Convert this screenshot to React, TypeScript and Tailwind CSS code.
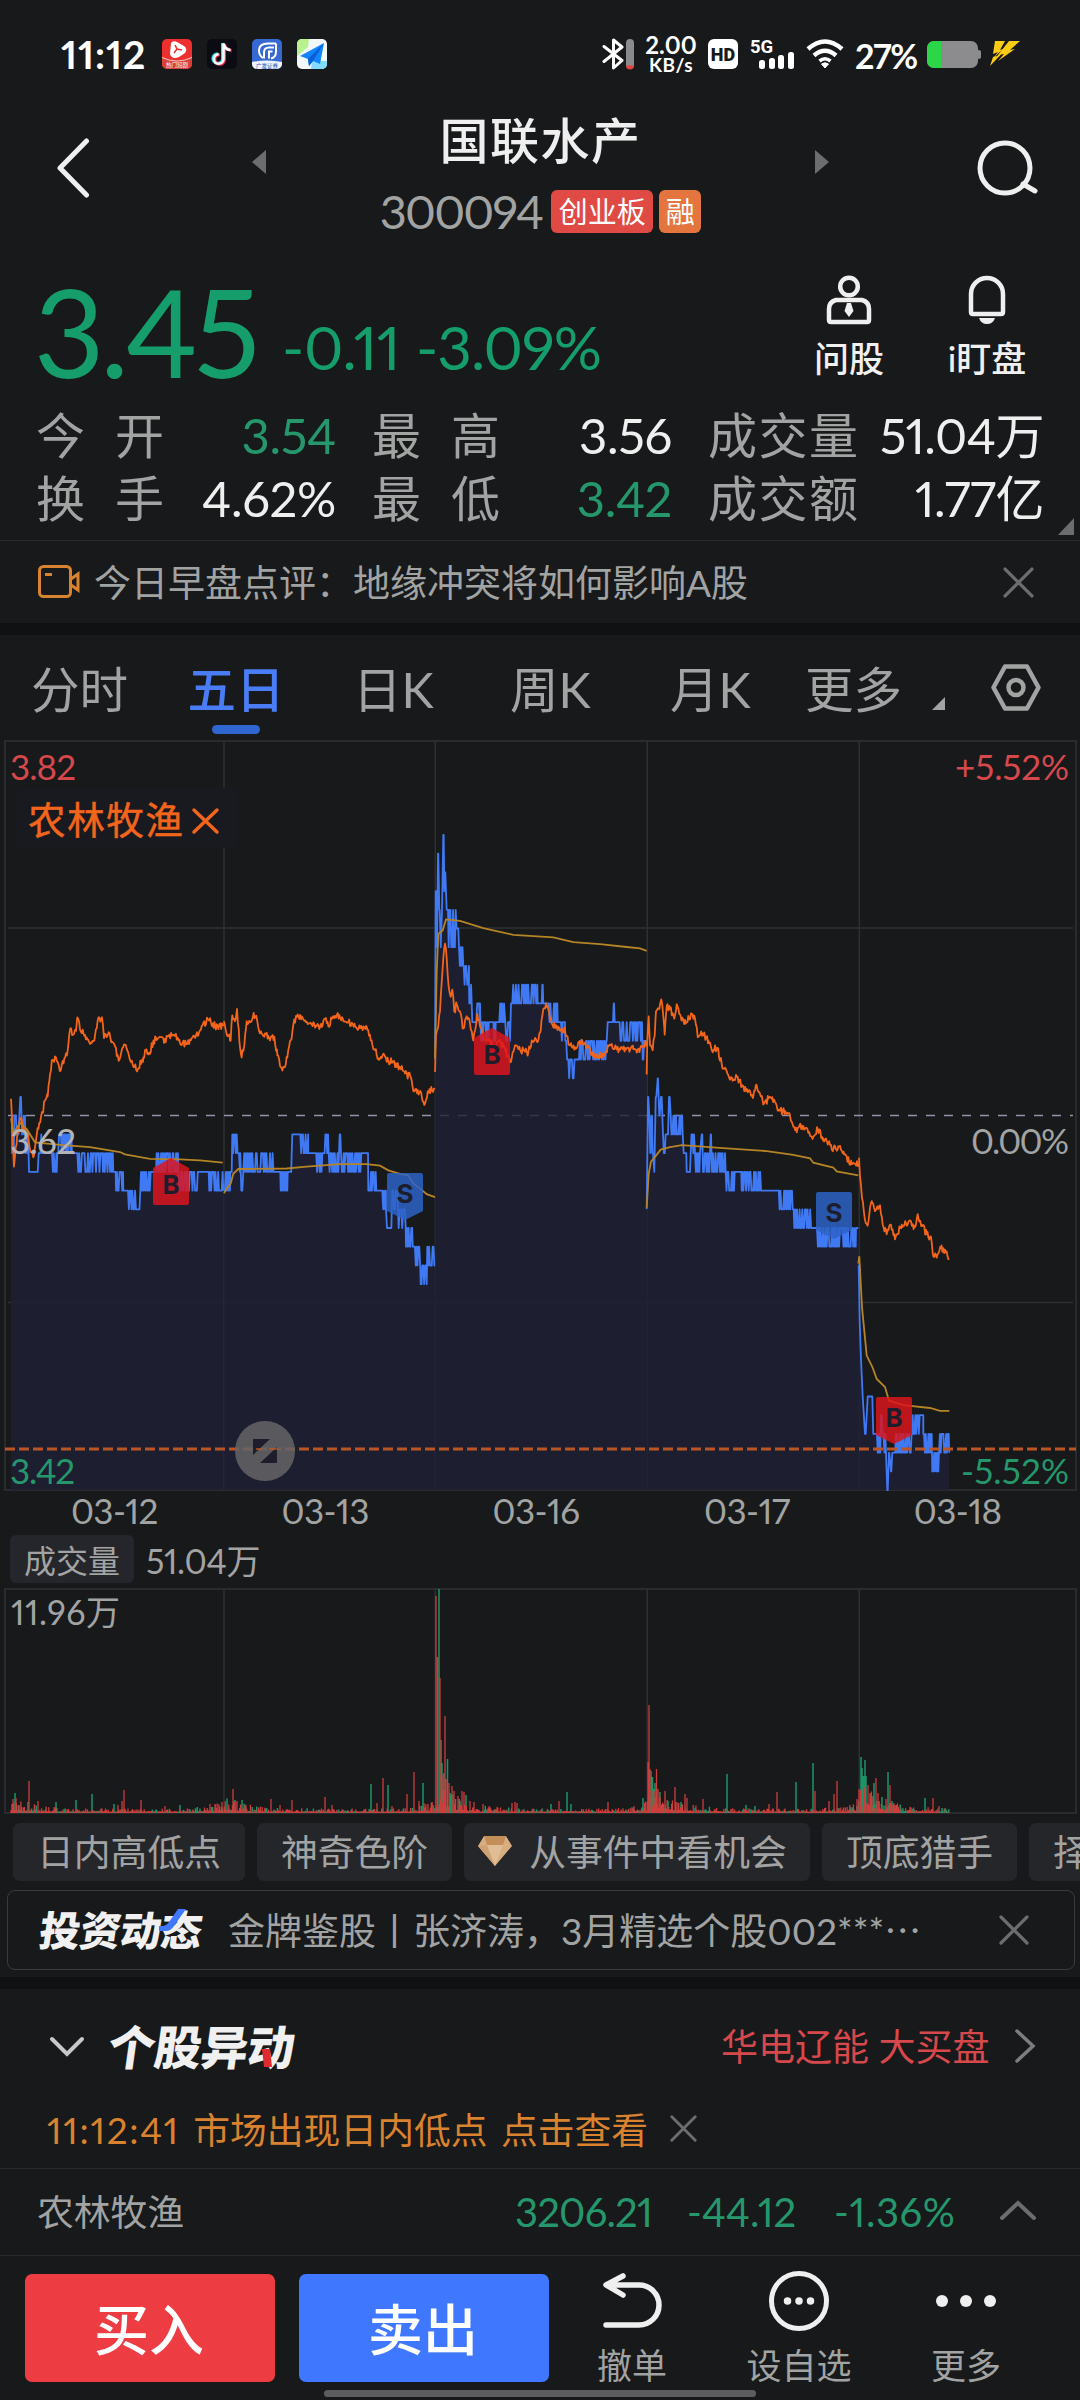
import type { ReactNode } from "react";
import { clsx } from "clsx";

type Point = [number, number];
// from, to, lowest tick, highest tick
type Run = [number, number, number, number];

// Chart traces are stored at 3 sub-steps per pixel horizontally.
const SUB_X = 3;
const SUB_Y = 2.063;
const CHART_TOP = 740;
const CHART_BOTTOM = 1490;
const ZERO_Y = 1115.7;
const TICK = 18.72;
const MINUTE = 2.65;

const DAY_OFFSET = [0, 0, 400, 640, 640];
const GRID_X = [224, 435.3, 647.3, 859.3];

const PRICE_RUNS: Run[][] = [
  [
    [33, 36, 0, 0], [36, 43, -2, 0], [45, 58, -1, 0], [61, 63, 1, 1], [66, 75, -1, 0], [76, 85, -2, -1],
    [87, 113, -3, -3], [116, 124, -2, -1], [125, 154, -2, -2], [156, 170, -3, -2], [172, 214, -2, -1],
    [216, 225, -2, -2], [227, 340, -3, -2], [342, 347, -3, -3], [348, 370, -4, -3], [371, 382, -4, -4],
    [384, 421, -5, -4], [423, 455, -4, -3], [456, 468, -3, -3], [470, 534, -3, -2], [535, 600, -4, -3],
    [601, 626, -3, -3], [628, 670, -4, -3],
  ],
  [
    [672, 690, -4, -3], [691, 695, -3, -3], [697, 715, -2, -1], [717, 721, -3, -2], [724, 727, -4, -4],
    [730, 757, -3, -2], [757, 830, -3, -2], [831, 841, -3, -3], [842, 862, -4, -3], [863, 875, -3, -2],
    [877, 925, -2, -1], [926, 944, -2, -2], [946, 968, -3, -2], [971, 984, -2, -1], [986, 1017, -3, -2],
    [1019, 1021, -1, -1], [1023, 1085, -3, -2], [1086, 1104, -2, -2], [1105, 1127, -4, -3],
    [1129, 1145, -4, -4], [1147, 1158, -5, -4], [1161, 1174, -6, -6], [1177, 1194, -5, -4],
    [1196, 1217, -6, -5], [1218, 1238, -7, -6], [1242, 1261, -8, -7], [1262, 1280, -9, -8], [1282, 1305, -8, -7],
  ],
  [
    [105, 105, 3, 3], [107, 108, 12, 12], [110, 111, 9, 9], [114, 115, 14, 14], [118, 119, 11, 11],
    [122, 122, 9, 9], [126, 126, 11, 11], [130, 131, 15, 15], [133, 133, 12, 12], [136, 136, 13, 13],
    [140, 144, 11, 11], [146, 175, 9, 11], [177, 190, 8, 9], [191, 207, 7, 8], [208, 215, 6, 7],
    [217, 227, 5, 5], [229, 240, 5, 6], [243, 286, 4, 5], [287, 297, 5, 5], [298, 312, 5, 6],
    [316, 330, 4, 5], [333, 336, 6, 6], [337, 412, 6, 7], [413, 425, 6, 6], [427, 428, 7, 7],
    [430, 445, 6, 6], [446, 472, 5, 6], [473, 482, 5, 5], [483, 495, 4, 5], [496, 503, 3, 4],
    [505, 525, 2, 3], [526, 536, 3, 3], [537, 620, 3, 4], [623, 639, 5, 5], [641, 642, 6, 6],
    [644, 650, 5, 5], [651, 726, 4, 5], [728, 730, 3, 3], [732, 740, 4, 4],
  ],
  [
    [20, 20, -5, -5], [24, 25, 1, 1], [28, 28, 0, 0], [31, 32, -2, -2], [34, 36, 0, 0], [38, 39, -2, -2],
    [43, 43, -3, -3], [47, 49, 1, 1], [53, 54, 2, 2], [58, 59, 0, 0], [63, 65, 1, 1], [69, 79, -2, -1],
    [81, 84, -1, -1], [87, 89, 1, 1], [92, 107, -1, 0], [108, 128, -1, 0], [131, 139, -2, -2],
    [140, 150, -3, -3], [152, 162, -2, -1], [165, 180, -3, -2], [185, 187, -1, -1], [189, 208, -3, -2],
    [212, 213, -1, -1], [216, 255, -3, -2], [257, 282, -4, -3], [284, 304, -3, -3], [305, 365, -4, -3],
    [368, 410, -4, -4], [411, 456, -5, -4], [458, 461, -5, -5], [463, 515, -6, -5], [516, 529, -6, -6],
    [531, 647, -7, -6], [648, 655, -6, -6],
  ],
  [
    [655, 656, -8, -8], [659, 659, -11, -11], [663, 663, -13, -13], [668, 668, -15, -15], [675, 677, -17, -17],
    [683, 697, -15, -15], [700, 711, -17, -17], [713, 721, -18, -17], [723, 725, -16, -16], [728, 738, -18, -17],
    [742, 743, -20, -20], [747, 748, -18, -18], [753, 754, -19, -19], [757, 766, -18, -18], [767, 817, -18, -17],
    [818, 850, -17, -16], [852, 875, -18, -17], [877, 895, -19, -18], [897, 928, -18, -17],
  ],
];

const SECTOR: Point[][] = [
  [
    [33, 740], [37, 800], [42, 880], [47, 840], [60, 782], [72, 800], [82, 805], [92, 850], [102, 857], [110, 815],
    [118, 790], [127, 770], [134, 745], [143, 735], [150, 690], [157, 660], [168, 655], [180, 683], [193, 657],
    [203, 640], [211, 595], [220, 608], [228, 600], [232, 572], [240, 597], [255, 608], [262, 618], [275, 625],
    [285, 610], [293, 578], [306, 572], [312, 615], [326, 603], [335, 622], [345, 632], [356, 662], [372, 628],
    [385, 645], [398, 670], [413, 680], [430, 655], [437, 640], [447, 645], [467, 613], [480, 612], [492, 625],
    [508, 608], [525, 610], [540, 625], [562, 627], [575, 615], [592, 610], [605, 590], [625, 577], [645, 590], [671, 590],
  ],
  [
    [671, 580], [677, 598], [685, 610], [692, 620], [697, 568], [705, 580], [711, 555], [718, 620], [725, 655],
    [733, 630], [740, 580], [750, 582], [761, 563], [772, 580], [780, 605], [795, 605], [810, 620], [823, 612],
    [832, 650], [842, 675], [852, 675], [862, 655], [872, 620], [880, 588], [890, 572], [905, 570], [918, 582],
    [935, 585], [950, 590], [965, 592], [975, 575], [985, 590], [1000, 570], [1018, 567], [1030, 580], [1045, 583],
    [1065, 590], [1085, 592], [1102, 598], [1112, 620], [1125, 640], [1137, 660], [1152, 648], [1165, 662],
    [1180, 665], [1200, 675], [1215, 688], [1232, 695], [1243, 725], [1253, 722], [1265, 735], [1273, 753],
    [1283, 725], [1305, 720],
  ],
  [
    [105, 685], [108, 610], [115, 590], [120, 560], [125, 500], [130, 450], [135, 420], [140, 450], [146, 510],
    [152, 530], [157, 515], [163, 560], [170, 545], [180, 560], [190, 595], [200, 570], [210, 585], [220, 620],
    [232, 565], [240, 590], [250, 610], [265, 620], [280, 630], [300, 620], [315, 640], [330, 665], [345, 630],
    [360, 638], [375, 643], [385, 645], [395, 620], [410, 622], [422, 600], [430, 555], [442, 548], [455, 585],
    [470, 590], [480, 600], [495, 600], [510, 630], [530, 635], [545, 618], [560, 635], [575, 645], [590, 655],
    [610, 650], [630, 628], [650, 638], [675, 635], [700, 638], [720, 637], [740, 625],
  ],
  [
    [20, 690], [22, 620], [26, 570], [30, 630], [38, 640], [44, 610], [48, 560], [58, 555], [64, 535], [70, 570],
    [74, 608], [80, 550], [90, 555], [103, 575], [110, 545], [122, 570], [137, 585], [155, 565], [165, 575],
    [173, 613], [188, 605], [205, 620], [220, 640], [232, 635], [245, 668], [262, 688], [280, 700], [293, 695],
    [305, 715], [325, 725], [340, 735], [347, 713], [360, 730], [370, 752], [385, 740], [397, 737], [415, 765],
    [435, 765], [450, 775], [465, 805], [485, 795], [500, 800], [515, 818], [533, 803], [550, 822], [565, 830],
    [580, 845], [595, 838], [612, 855], [635, 875], [655, 872],
  ],
  [
    [657, 862], [660, 900], [666, 945], [675, 990], [683, 1002], [690, 965], [697, 955], [705, 972], [712, 962],
    [720, 960], [728, 1000], [740, 1020], [750, 1000], [765, 1030], [785, 1000], [805, 995], [825, 1005],
    [833, 978], [845, 1000], [860, 1020], [873, 1025], [880, 1065], [890, 1068], [902, 1048], [920, 1055], [928, 1070],
  ],
];

const AVERAGE: Point[][] = [
  [
    [33, 780], [40, 812], [60, 790], [80, 803], [105, 830], [180, 835], [270, 840], [360, 850], [375, 855],
    [400, 858], [450, 864], [540, 865], [600, 867], [668, 872],
  ],
  [
    [672, 935], [680, 925], [692, 915], [700, 895], [715, 885], [860, 884], [920, 880], [1020, 875], [1100, 875],
    [1140, 878], [1165, 888], [1200, 895], [1225, 898], [1240, 915], [1260, 925], [1280, 937], [1305, 943],
  ],
  [
    [105, 655], [110, 480], [115, 400], [128, 393], [138, 370], [180, 373], [250, 388], [340, 402], [460, 407],
    [520, 417], [600, 421], [680, 427], [720, 430], [740, 435],
  ],
  [
    [20, 965], [26, 895], [33, 870], [45, 860], [62, 845], [90, 840], [125, 836], [250, 842], [380, 848],
    [460, 856], [510, 863], [520, 872], [580, 882], [590, 890], [655, 898],
  ],
  [
    [655, 1080], [658, 1065], [666, 1170], [680, 1270], [697, 1293], [710, 1318], [735, 1335], [747, 1363],
    [790, 1372], [870, 1378], [900, 1384], [928, 1384],
  ],
];

function seeded(seed: number) {
  let s = seed;
  return () => {
    s = (s * 1664525 + 1013904223) % 4294967296;
    return s / 4294967296;
  };
}

const toPath = (pts: Point[]) => pts.map(([x, y], i) => `${i ? "L" : "M"}${x.toFixed(1)} ${y.toFixed(1)}`).join("");

function pricePoints(day: number): Point[] {
  const rand = seeded(day * 97 + 11);
  const pts: Point[] = [];
  for (const [from, to, lo, hi] of PRICE_RUNS[day]) {
    let level = rand() > 0.5 ? hi : lo;
    for (let x = from; x <= to; x += MINUTE) {
      pts.push([DAY_OFFSET[day] + x / SUB_X, ZERO_Y - level * TICK]);
      if (hi !== lo && rand() > 0.36) level = level === lo ? hi : hi - lo > 1 && rand() > 0.5 ? lo + 1 : lo;
    }
    pts.push([DAY_OFFSET[day] + to / SUB_X, ZERO_Y - level * TICK]);
  }
  return pts;
}

function tracePoints(src: Point[], day: number, noise: number): Point[] {
  const rand = seeded(day * 31 + 7);
  const pts: Point[] = [];
  src.forEach(([x, y], i) => {
    pts.push([DAY_OFFSET[day] + x / SUB_X, CHART_TOP + y / SUB_Y]);
    const next = src[i + 1];
    if (!noise || !next) return;
    for (let nx = x + MINUTE; nx < next[0] - 1; nx += MINUTE) {
      const k = (nx - x) / (next[0] - x);
      const ny = y + (next[1] - y) * k + (rand() - 0.5) * noise;
      pts.push([DAY_OFFSET[day] + nx / SUB_X, CHART_TOP + ny / SUB_Y]);
    }
  });
  return pts;
}

const days = [0, 1, 2, 3, 4];
const PRICE = days.map(pricePoints);
const pricePath = PRICE.map(toPath).join("");
const areaPath = PRICE.map(
  (p) => `${toPath(p)}L${p[p.length - 1][0].toFixed(1)} ${CHART_BOTTOM}L${p[0][0].toFixed(1)} ${CHART_BOTTOM}Z`,
).join("");
const sectorPath = days.map((d) => toPath(tracePoints(SECTOR[d], d, 15))).join("");
const averagePath = days.map((d) => toPath(tracePoints(AVERAGE[d], d, 0))).join("");

// x, height, 1 = up (red) / 0 = down (green)
const VOLUME_PEAKS: [number, number, 0 | 1][] = [
  [13, 14, 1], [15, 20, 0], [16, 15, 1], [29, 32, 1], [28, 11, 0], [38, 12, 1], [56, 11, 0], [76, 13, 0], [92, 19, 0],
  [114, 9, 0], [118, 8, 1], [122, 12, 1], [124, 23, 1], [141, 13, 1], [165, 7, 1], [180, 8, 0], [210, 9, 1], [215, 9, 1],
  [222, 11, 1], [233, 24, 1], [235, 13, 0], [237, 12, 1], [242, 13, 0], [271, 14, 1], [280, 8, 1], [292, 13, 1],
  [325, 16, 1], [332, 8, 1], [371, 29, 0], [377, 10, 1], [383, 35, 1], [388, 28, 0], [392, 7, 1], [407, 19, 1],
  [414, 41, 1], [419, 12, 1], [423, 30, 0], [424, 10, 1], [428, 9, 1], [436, 217, 1], [437.5, 156, 1], [439, 224, 0],
  [440, 135, 1], [441, 73, 0], [442, 50, 0], [443, 38, 1], [444, 40, 0], [445, 97, 1], [446, 34, 1], [447.5, 54, 0],
  [449, 30, 1], [450, 20, 0], [452, 27, 1], [454, 22, 1], [458, 17, 1], [460, 12, 0], [462, 22, 1], [464, 21, 1],
  [466, 18, 0], [470, 12, 1], [474, 11, 1], [483, 9, 1], [512, 10, 1], [515, 11, 1], [517, 10, 1], [551, 9, 0],
  [559, 12, 1], [567, 21, 0], [571, 9, 0], [608, 11, 1], [634, 7, 1], [643, 15, 0], [648, 51, 1], [649, 108, 1],
  [650, 44, 1], [651, 42, 0], [652.5, 36, 0], [654, 22, 1], [655, 30, 0], [656.5, 44, 1], [658, 24, 1], [660, 16, 1],
  [665, 22, 1], [668, 12, 0], [675, 26, 1], [681, 11, 0], [685, 19, 1], [687, 15, 1], [703, 14, 1], [727, 39, 0],
  [746, 8, 0], [755, 7, 0], [769, 9, 1], [777, 21, 1], [796, 31, 0], [813, 50, 0], [815, 22, 1], [829, 12, 1],
  [834, 19, 1], [837, 32, 1], [857, 14, 1], [859, 24, 1], [861, 56, 0], [862, 45, 0], [863.5, 37, 0], [865, 53, 0],
  [866, 37, 0], [868, 28, 1], [870, 20, 1], [872, 16, 1], [874, 30, 0], [876, 35, 1], [878, 20, 1], [879, 12, 0],
  [882, 16, 0], [886, 14, 1], [888, 41, 0], [890, 28, 1], [892, 12, 0], [894, 10, 1], [896, 8, 0], [925, 15, 0],
  [933, 15, 1], [939, 7, 1], [942, 5, 0],
];

// Trading gets busier right after the open and before the close.
function volumeFloor(x: number) {
  for (const open of [11, 224, 436, 648, 860]) {
    const d = x - open;
    if (d < 0 || d > 212) continue;
    const burst = open < 400 ? 9 : 22;
    return 3.2 + burst * Math.exp(-d / 22) + 7 * Math.exp(-(212 - d) / 14);
  }
  return 3.2;
}

const volumePaths = (() => {
  const rand = seeded(2024);
  let up = "";
  let down = "";
  for (let x = 11; x < 949; x += 0.9) {
    const r = rand();
    const h = Math.max(1.6, volumeFloor(x) * (0.25 + r * r * 1.15));
    const seg = `M${x.toFixed(1)} 1813v-${h.toFixed(1)}`;
    if (rand() > 0.3) up += seg;
    else down += seg;
  }
  for (const [x, h, isUp] of VOLUME_PEAKS) {
    const seg = `M${x} 1813v-${h}`;
    if (isUp) up += seg;
    else down += seg;
  }
  return { up, down };
})();

const CJK = "font-['Noto_Sans_CJK_SC',sans-serif]";

function Cross({ size, className }: { size: number; className: string }) {
  return (
    <svg width={size} height={size} viewBox="0 0 30 30" className={className} fill="none" stroke="currentColor">
      <path d="M2 2 28 28M28 2 2 28" strokeWidth="3.200" strokeLinecap="round" />
    </svg>
  );
}

function StatusBar() {
  return (
    <div className="flex h-[108px] items-center pl-[61px] text-white">
      <span className="w-[101px] text-[39px] leading-none font-bold tracking-[0.9px] whitespace-nowrap">11:12</span>
      <div className="flex gap-[15px]">
        <svg width="30" height="30" viewBox="0 0 30 30">
          <rect width="30" height="30" rx="5" fill="#ee2f30" />
          <path d="M0 18q15 7 30 0v7a5 5 0 0 1-5 5H5a5 5 0 0 1-5-5z" fill="#d94038" />
          <path d="M0 18.500q15 7 30 0" fill="none" stroke="#fff" strokeWidth=".7" />
          <path d="M9 4q2-3 6-1l7 4q4 3 1 7l-6 4q-7 3-9-3z" fill="#fff" />
          <path d="m13 6 2 4-3 4M15 10l5 1" stroke="#ee2f30" strokeWidth="1.500" fill="none" />
          <text x="15" y="27.500" fontSize="5.500" textAnchor="middle" fill="#fff">热门短剧</text>
        </svg>
        <svg width="30" height="30" viewBox="0 0 30 30">
          <rect width="30" height="30" rx="5" fill="#0b0b14" />
          <g fill="none" strokeWidth="3">
            <path d="M15.500 4v15.500a4.800 4.800 0 1 1-4.800-4.800M15.500 4q1 6 7 6.500" stroke="#27e8e4" />
            <path d="M17.500 5v15.500a4.800 4.800 0 1 1-4.800-4.800M17.500 5q1 6 7 6.500" stroke="#f8325a" />
            <path d="M16.500 4.500V20a4.800 4.800 0 1 1-4.800-4.800M16.500 4.500q1 6 7 6.500" stroke="#fff" strokeWidth="2.600" />
          </g>
        </svg>
        <svg width="30" height="30" viewBox="0 0 30 30">
          <rect width="30" height="30" rx="5" fill="#3769d2" />
          <path d="M0 23q15-3 30 0v2a5 5 0 0 1-5 5H5a5 5 0 0 1-5-5z" fill="#eef3ff" />
          <g fill="none" stroke="#fff" strokeWidth="2">
            <path d="M24 4.500H16q-9 0-9 7 0 5 4 7.500M22 8.500h-5q-5 0-5 5v6" />
            <path d="M20.500 12.500H17v7M24 4.500v8q0 6-5 7" />
          </g>
          <text x="15" y="29" fontSize="5.500" textAnchor="middle" fill="#2b57b8">广发证券</text>
        </svg>
        <svg width="30" height="30" viewBox="0 0 30 30">
          <rect width="30" height="30" rx="5" fill="#f1f7fb" />
          <path d="M5 0h7l-1 8-11 9V5a5 5 0 0 1 5-5z" fill="#b9f28c" />
          <path d="M15 22h15v3a5 5 0 0 1-5 5H14z" fill="#7fdcff" />
          <path d="M27 4 3 17l8 3 1 7 4-5 7 3z" fill="#1185ff" />
          <path d="M27 4 11 20l1 7 4-5z" fill="#0a5fd6" />
        </svg>
      </div>
      <div className="ml-[275px] flex items-center">
        <svg width="33" height="32" viewBox="0 0 33 32" fill="none">
          <path d="m2 8.500 18 14L11.500 30V2l8.500 7L2 23.500" stroke="#fff" strokeWidth="3" strokeLinejoin="round" strokeLinecap="round" />
          <rect x="24" y="1" width="8" height="30" rx="4" fill="#8b8b8d" />
          <path d="M24 27.500h8a4 4 0 0 1-8 0z" fill="#e0443c" />
        </svg>
        <div className="ml-[11px] flex w-[50px] flex-col items-center font-bold">
          <span className="text-[24px] leading-[20px]">2.00</span>
          <span className="text-[19px] leading-[19px] tracking-[0.5px]">KB/s</span>
        </div>
        <div className="ml-[12px] flex size-[30px] items-center justify-center rounded-[6px] bg-white font-['Roboto',sans-serif] text-[18px] font-black text-[#17191a]">
          HD
        </div>
        <svg width="46" height="32" viewBox="0 0 46 32" className="ml-[12px] overflow-visible" fill="#fff">
          <text x="0" y="15" fontSize="18.500" fontWeight="700" fontFamily="Roboto, sans-serif">5G</text>
          <rect x="9" y="22" width="6" height="9" rx="2.500" />
          <rect x="19" y="20" width="6" height="11" rx="2.500" />
          <rect x="28" y="17" width="6" height="14" rx="2.500" />
          <rect x="38" y="14" width="6" height="17" rx="2.500" />
        </svg>
        <svg width="38" height="30" viewBox="0 0 38 30" className="ml-[10px]" fill="none" stroke="#fff" strokeWidth="4.500">
          <path d="M2 10q17-15 34 0M8 16.500q11-9.500 22 0" />
          <path d="M13.500 22q5.500-4.500 11 0" strokeWidth="3.600" />
          <path d="m15.500 25 3.500 4 3.500-4q-3.500-2.500-7 0z" fill="#fff" strokeWidth="1" />
        </svg>
        <span className="ml-[11px] w-[72px] pt-[4px] text-[34px] leading-none font-bold tracking-[-1.200px]">27%</span>
        <svg width="54" height="28" viewBox="0 0 54 28" className="mt-[2px]">
          <rect width="51" height="27" rx="7" fill="#8c8c8e" />
          <path d="M7 0h7v27H7a7 7 0 0 1-7-7V7a7 7 0 0 1 7-7z" fill="#2bd648" />
          <rect x="50" y="9" width="4" height="9" rx="2" fill="#8c8c8e" />
        </svg>
        <svg width="30" height="26" viewBox="0 0 30 26" className="ml-[9px]" fill="#fccb14">
          <path d="M5 0h10l-5 9 4-1.500L4 16l4-5-5 2z" />
          <path d="M19 0h11L20 9l5-1L8 20l6-7-3 .500L0 25l3-9 4-1.500-1 2z" />
        </svg>
      </div>
    </div>
  );
}

function Header() {
  return (
    <div className="flex h-[136px] items-start">
      <svg width="34" height="60" viewBox="0 0 34 60" className="mt-[30px] ml-[56px]" fill="none" stroke="#efefef" strokeWidth="5">
        <path d="M30.500 3 4 30l26.500 27" strokeLinecap="round" strokeLinejoin="round" />
      </svg>
      <svg width="14" height="24" viewBox="0 0 14 24" className="mt-[42px] ml-[162px]">
        <path d="M14 0v24L0 12z" fill="#6c6d6e" />
      </svg>
      <div className="flex w-[549px] flex-col items-center">
        <h1 className="mt-[7px] text-[49px] leading-[50px] font-medium tracking-[1.500px] text-[#efefef]">国联水产</h1>
        <div className="mt-[24px] flex h-[44px] items-center">
          <span className="mr-[9px] text-[47px] leading-none tracking-[-1.800px] text-[#a2a3a3]">300094</span>
          <span className="mr-[6px] flex h-[43px] w-[102px] items-center justify-center rounded-[6px] bg-[#e04a44] text-[29px] leading-none text-white">
            创业板
          </span>
          <span className="flex h-[43px] w-[42px] items-center justify-center rounded-[6px] bg-[#e4753e] text-[29px] leading-none text-white">
            融
          </span>
        </div>
      </div>
      <svg width="14" height="24" viewBox="0 0 14 24" className="mt-[42px]">
        <path d="M0 0v24l14-12z" fill="#6c6d6e" />
      </svg>
      <svg width="62" height="58" viewBox="0 0 62 58" className="mt-[31px] ml-[147px]" fill="none" stroke="#efefef" strokeWidth="5">
        <circle cx="29" cy="29" r="25" />
        <path d="m47 45 12 7" strokeLinecap="round" />
      </svg>
    </div>
  );
}

function QuickAction({ label, className, children }: { label: string; className: string; children: ReactNode }) {
  return (
    <div className={clsx("flex flex-col items-center gap-[15px]", className)}>
      {children}
      <span className="text-[35px] leading-[36px] font-medium whitespace-nowrap text-[#f0f0f0]">{label}</span>
    </div>
  );
}

function Quote() {
  return (
    <div className="flex h-[160px] items-start text-[#159e6b]">
      <span className="mt-[26px] ml-[34px] w-[248px] text-[122px] leading-none tracking-[-4px]">3.45</span>
      <span className="mt-[73px] w-[134px] text-[60px] leading-none tracking-[-0.4px] whitespace-nowrap">-0.11</span>
      <span className="mt-[73px] w-[381px] text-[60px] leading-none tracking-[-1px]">-3.09%</span>
      <QuickAction label="问股" className="mt-[31px] w-[104px]">
        <svg width="46" height="50" viewBox="0 0 46 50" fill="none" stroke="#efefef" strokeWidth="4.500">
          <circle cx="23" cy="11.500" r="8.800" />
          <path d="M10 25h26q7 2 7 9v11q0 2-2 2H5q-2 0-2-2V34q0-7 7-9z" />
          <path d="m21 28-2.500 8 4.500 6 4.500-6-2.500-8z" fill="#efefef" stroke="none" />
        </svg>
      </QuickAction>
      <QuickAction label="i盯盘" className="mt-[31px] ml-[28px] w-[116px]">
        <svg width="38" height="50" viewBox="0 0 38 50" fill="none" stroke="#efefef" strokeWidth="4.500">
          <path d="M3 37V19a16 16 0 0 1 32 0v18q0 2-2 2H5q-2 0-2-2z" />
          <path d="M11 43h16q-2 6-8 6t-8-6z" fill="#efefef" stroke="none" />
        </svg>
      </QuickAction>
    </div>
  );
}

const STATS = [
  ["今开", "3.54", "down", "最高", "3.56", "", "成交量", "51.04万"],
  ["换手", "4.62%", "", "最低", "3.42", "down", "成交额", "1.77亿"],
];

function Stats() {
  return (
    <div className="relative h-[137px] border-b border-[#2a2b2e] pl-[36px] text-[49px] leading-none">
      {STATS.map(([a, av, at, b, bv, bt, c, cv]) => (
        <div key={a} className="flex h-[63px] items-center whitespace-nowrap">
          <span className="w-[138px] tracking-[30px] text-[#a2a3a3]">{a}</span>
          <span className={clsx("w-[162px] text-right tracking-[-0.3px]", at ? "text-[#26976c]" : "text-[#efefef]")}>{av}</span>
          <span className="ml-[36px] w-[138px] tracking-[30px] text-[#a2a3a3]">{b}</span>
          <span className={clsx("w-[162px] text-right tracking-[-0.3px]", bt ? "text-[#26976c]" : "text-[#efefef]")}>{bv}</span>
          <span className="ml-[36px] w-[152px] tracking-[1.500px] text-[#a2a3a3]">{c}</span>
          <span className="w-[184px] text-right tracking-[-0.5px] text-[#efefef]">{cv}</span>
        </div>
      ))}
      <svg width="16" height="17" viewBox="0 0 16 17" className="absolute right-[6px] bottom-[5px]">
        <path d="M16 0v17H0z" fill="#6c6d6e" />
      </svg>
    </div>
  );
}

function NewsTicker() {
  return (
    <div className="flex h-[94px] items-center border-b-[12px] border-[#101113] pl-[38px]">
      <svg width="42" height="34" viewBox="0 0 42 34" fill="none" stroke="#d9822f" strokeWidth="3">
        <rect x="1.500" y="1.500" width="31" height="30" rx="4" />
        <path d="m33 14 7-5v16l-7-5M7 9.500h7" />
      </svg>
      <span className="ml-[14px] w-[909px] pt-[1px] text-[37px] leading-none text-[#a2a3a3]">今日早盘点评：地缘冲突将如何影响A股</span>
      <Cross size={31} className="text-[#6c6d6e]" />
    </div>
  );
}

const TABS = [
  { label: "分时", width: "w-[157px]" },
  { label: "五日", width: "w-[165px]" },
  { label: "日K", width: "w-[157px]" },
  { label: "周K", width: "w-[160px]" },
  { label: "月K", width: "w-[135px]" },
  { label: "更多", width: "w-[127px]" },
];

function Tabs() {
  return (
    <div className="flex h-[105px] items-start pt-[29px] pl-[31px] text-[48.500px] leading-[50px] text-[#a2a3a3]">
      {TABS.map(({ label, width }) => (
        <div key={label} className={clsx("whitespace-nowrap", width)}>
          {label === "五日" ? (
            <div className="flex w-[96px] flex-col items-center font-medium text-[#4a7df5]">
              {label}
              <span className="mt-[11px] h-[9px] w-[48px] rounded-full bg-[#2f66cf]" />
            </div>
          ) : (
            label
          )}
        </div>
      ))}
      <svg width="13" height="13" viewBox="0 0 13 13" className="mt-[33px]">
        <path d="M13 0v13H0z" fill="#a2a3a3" />
      </svg>
      <svg width="50" height="47" viewBox="0 0 50 47" className="ml-[46px]" fill="none" stroke="#a2a3a3" strokeWidth="4.500">
        <path d="M14 2.500h22l11.500 21L36 44.500H14L2.500 23.500z" strokeLinejoin="round" />
        <circle cx="25" cy="23.500" r="7.500" />
      </svg>
    </div>
  );
}

const MARKERS = [
  { x: 153, y: 1158, kind: "B", up: true },
  { x: 387, y: 1173, kind: "S", up: false },
  { x: 474, y: 1028, kind: "B", up: true },
  { x: 816, y: 1192, kind: "S", up: false },
  { x: 876, y: 1397, kind: "B", up: false },
];

function Marker({ x, y, kind, up }: (typeof MARKERS)[number]) {
  const shape = up
    ? "M0 10 18 0l18 10v35q0 2-2 2H2q-2 0-2-2z"
    : "M2 0h32q2 0 2 2v36l-18 9-18-9V2q0-2 2-2z";
  return (
    <g transform={`translate(${x} ${y})`}>
      <path d={shape} fill={kind === "B" ? "#dc161e" : "#2d63c8"} opacity=".84" />
      <text x="18" y={up ? 36 : 30} textAnchor="middle" fontSize="26" fontWeight="700" fill="#1d1d2c" fontFamily="Inter, sans-serif">
        {kind}
      </text>
    </g>
  );
}

function PriceChart() {
  return (
    <svg width="1080" height="752" viewBox="0 740 1080 752" className="block text-[35px]">
      <rect x="5" y="741" width="1071" height="749" fill="none" stroke="#2a2b2e" strokeWidth="2" />
      <path d="M8 928H1073M8 1302.500H1073" stroke="#2f3033" strokeWidth="1.500" />
      <path d={GRID_X.map((x) => `M${x} 741V1490`).join("")} stroke="#2f3033" strokeWidth="1.500" />
      <path d="M8 1115.500H1073" stroke="#9293ac" strokeWidth="1.500" strokeDasharray="9 9" />
      <path d={areaPath} fill="#1f1f36" opacity=".8" />
      <path d={pricePath} fill="none" stroke="#4079f4" strokeWidth="1.800" strokeLinejoin="round" />
      <path d={sectorPath} fill="none" stroke="#f2651b" strokeWidth="1.800" strokeLinejoin="round" />
      <path d={averagePath} fill="none" stroke="#b58426" strokeWidth="1.800" />
      <rect x="16" y="788" width="221" height="60" rx="6" fill="#181a20" />
      <text x="28" y="834" fontSize="37.500" textLength="155" fill="#f2651b" stroke="#f2651b" strokeWidth=".5">农林牧渔</text>
      <path d="m194 810 23 22m0-22-23 22" stroke="#f2651b" strokeWidth="3.500" strokeLinecap="round" />
      {MARKERS.map((m) => (
        <Marker key={m.x} {...m} />
      ))}
      <path d="M5 1449H1076" stroke="#bb5524" strokeWidth="3" strokeDasharray="10 4" />
      <circle cx="265" cy="1451" r="30" fill="#646466" opacity=".86" />
      <path d="M253 1439h17l-17 16zM277 1463h-17l17-16z" fill="#1d1d2c" />
      <path d="M256 1449h6m7 0h8" stroke="#bb5524" strokeWidth="1.500" />
      <text x="10" y="780" textLength="66" fill="#d6484c">3.82</text>
      <text x="10" y="1154" textLength="66" fill="#b4b4b6">3.62</text>
      <text x="10" y="1484" textLength="65" fill="#26976c">3.42</text>
      <g textAnchor="end">
        <text x="1069" y="780" textLength="114" fill="#d6484c">+5.52%</text>
        <text x="1069" y="1154" textLength="98" fill="#a2a3a3">0.00%</text>
        <text x="1069" y="1484" textLength="108" fill="#26976c">-5.52%</text>
      </g>
    </svg>
  );
}

const DATES = ["03-12", "03-13", "03-16", "03-17", "03-18"];

function VolumeChart() {
  return (
    <>
      <div className="flex h-[43px] pl-[9px]">
        {DATES.map((d) => (
          <span key={d} className="w-[210.800px] text-center text-[35px] leading-[37px] tracking-[-0.6px] text-[#a2a3a3]">
            {d}
          </span>
        ))}
      </div>
      <div className="flex h-[53px] items-start pl-[10px] text-[32px] text-[#a2a3a3]">
        <span className="h-[48px] w-[124px] rounded-[6px] bg-[#25262b] pt-[2px] text-center leading-[48px]">成交量</span>
        <span className="ml-[12px] pt-[2px] text-[34px] leading-[48px] tracking-[-0.3px]">51.04万</span>
      </div>
      <svg width="1080" height="235" viewBox="0 1588 1080 235" className="block">
        <rect x="5" y="1589" width="1071" height="224" fill="none" stroke="#2a2b2e" strokeWidth="2" />
        <path d={GRID_X.map((x) => `M${x} 1589V1813`).join("")} stroke="#2f3033" strokeWidth="1.500" />
        <path d={volumePaths.down} stroke="#1c9468" strokeWidth="1.500" />
        <path d={volumePaths.up} stroke="#cd3d3c" strokeWidth="1.300" />
        <text x="11" y="1625" fontSize="34" textLength="109" fill="#a2a3a3">11.96万</text>
      </svg>
    </>
  );
}

function Chip({ className, children }: { className: string; children: ReactNode }) {
  return (
    <div
      className={clsx(
        "flex h-[58px] shrink-0 items-center justify-center rounded-[7px] bg-[#25262a] pt-[1px] text-[36.800px] leading-none whitespace-nowrap text-[#a2a3a3]",
        className,
      )}
    >
      {children}
    </div>
  );
}

function IndicatorChips() {
  return (
    <div className="flex gap-[12px] overflow-hidden pl-[13px]">
      <Chip className="w-[232px]">日内高低点</Chip>
      <Chip className="w-[195px]">神奇色阶</Chip>
      <Chip className="w-[346px]">
        <svg width="34" height="30" viewBox="0 0 34 30" className="mr-[17px] mb-[3px] ml-[-9px]">
          <path d="M6 0h22l6 10-17 20L0 10z" fill="#d8ae80" />
          <path d="M6 0h22l-3 9H9z" fill="#c48e58" />
          <path d="M0 10 9 9l8 21z" fill="#cfa274" />
          <path d="M9 9h16l-8 21z" fill="#e0bd95" />
        </svg>
        从事件中看机会
      </Chip>
      <Chip className="w-[195px]">顶底猎手</Chip>
      <Chip className="w-[195px]">择时先锋</Chip>
    </div>
  );
}

function InvestNews() {
  return (
    <div className="border-b-[12px] border-[#101113] pt-[9px] pr-[5px] pb-[7px] pl-[7px]">
      <div className="flex h-[80px] items-center rounded-[8px] border border-[#3a3b3e] pl-[32px]">
        <div className="relative w-[188px]">
          <span className={clsx("inline-block skew-x-[-8deg] text-[41px] leading-none font-black tracking-[-0.5px] whitespace-nowrap text-[#f0f0f0]", CJK)}>
            投资动态
          </span>
          <svg width="30" height="24" viewBox="0 0 30 24" className="absolute top-px left-[118px]">
            <path d="M20 0h8L16 17q-3 5-8 5H1v-5h3q4 0 7-4z" fill="#3f78ff" />
          </svg>
        </div>
        <span className="w-[771px] text-[37px] leading-none whitespace-nowrap text-[#a2a3a3]">
          金牌鉴股丨张济涛，3月精选个股002***<span className={CJK}>…</span>
        </span>
        <Cross size={30} className="text-[#6c6d6e]" />
      </div>
    </div>
  );
}

function StockMoves() {
  return (
    <>
      <div className="flex h-[114px] items-center pl-[49px]">
        <svg width="36" height="22" viewBox="0 0 36 22" fill="none" stroke="#c8c8c8" strokeWidth="4" className="mt-[2px]">
          <path d="m3 3 15 15L33 3" strokeLinecap="round" />
        </svg>
        <div className="relative ml-[24px] w-[612px]">
          <span className={clsx("inline-block skew-x-[-8deg] text-[47px] leading-none font-black tracking-[-0.5px] text-[#f0f0f0]", CJK)}>
            个股异动
          </span>
          <svg width="10" height="18" viewBox="0 0 10 18" className="absolute top-[28px] left-[153px]">
            <path d="M0 0h8l2 18H2z" fill="#dd2b2f" />
          </svg>
        </div>
        <span className="w-[293px] text-[37px] leading-none whitespace-nowrap text-[#d6484c]">华电辽能 大买盘</span>
        <svg width="22" height="36" viewBox="0 0 22 36" fill="none" stroke="#7c7d7e" strokeWidth="3.500">
          <path d="m3 3 16 15L3 33" strokeLinecap="round" />
        </svg>
      </div>
      <div className="flex h-[66px] items-start border-b border-[#2a2b2e] pt-[8px] pl-[47px]">
        <span className="w-[623px] text-[36.800px] leading-[38px] [word-spacing:4px] whitespace-nowrap text-[#d9822f]">
          <span className="tracking-[1.700px]">11:12:41</span> 市场出现日内低点 点击查看
        </span>
        <Cross size={27} className="mt-[4px] text-[#6c6d6e]" />
      </div>
    </>
  );
}

function SectorRow() {
  return (
    <div className="flex h-[87px] items-center border-b border-[#2a2b2e] pl-[37px] leading-none whitespace-nowrap text-[#26976c]">
      <span className="w-[478px] pt-[1px] text-[36.800px] text-[#a2a3a3]">农林牧渔</span>
      <span className="w-[172px] text-[40px] tracking-[-0.8px]">3206.21</span>
      <span className="w-[147px] text-[40px] tracking-[0.1px]">-44.12</span>
      <span className="w-[165px] text-[40px] tracking-[0.6px]">-1.36%</span>
      <svg width="38" height="22" viewBox="0 0 38 22" fill="none" stroke="#6c6d6e" strokeWidth="4" className="mb-[5px]">
        <path d="M3 19 19 4l16 15" strokeLinecap="round" />
      </svg>
    </div>
  );
}

function BottomAction({ label, className, children }: { label: string; className: string; children: ReactNode }) {
  return (
    <div className={clsx("flex flex-col items-center text-[35px] leading-[36px] text-[#a2a3a3]", className)}>
      <div className="flex h-[60px] items-center">{children}</div>
      <span className="mt-[16px]">{label}</span>
    </div>
  );
}

function TradeBar() {
  return (
    <>
      <div className="flex h-[134px] items-start pl-[25px]">
        <button className="mt-[18px] h-[108px] w-[250px] rounded-[7px] bg-[#ed3d42] pt-[2px] pr-[2px] text-[55px] font-medium text-white">买入</button>
        <button className="mt-[18px] ml-[24px] h-[108px] w-[250px] rounded-[7px] bg-[#3f78ff] pt-[2px] pr-[2px] text-[55px] font-medium text-white">卖出</button>
        <BottomAction label="撤单" className="mt-[15px] ml-[31px] w-[104px]">
          <svg width="60" height="56" viewBox="0 0 60 56" fill="none" stroke="#efefef" strokeWidth="5.500">
            <path d="M21 3 4 12l17 10M5 12h32a20 20 0 0 1 0 40H4" strokeLinecap="round" strokeLinejoin="round" />
          </svg>
        </BottomAction>
        <BottomAction label="设自选" className="mt-[15px] ml-[54px] w-[122px]">
          <svg width="62" height="62" viewBox="0 0 62 62" fill="none" stroke="#efefef" strokeWidth="5">
            <circle cx="31" cy="31" r="27.500" />
            <path d="M19.500 31h.01M31 31h.01M42.500 31h.01" strokeWidth="7.500" strokeLinecap="round" />
          </svg>
        </BottomAction>
        <BottomAction label="更多" className="mt-[15px] ml-[54px] w-[104px]">
          <svg width="62" height="14" viewBox="0 0 62 14" fill="#efefef">
            <circle cx="7" cy="7" r="6" />
            <circle cx="31" cy="7" r="6" />
            <circle cx="55" cy="7" r="6" />
          </svg>
        </BottomAction>
      </div>
      <div className="mx-auto h-[7px] w-[432px] rounded-full bg-[#5c5d5f]" />
    </>
  );
}

export default function App() {
  return (
    <div className="h-[2400px] w-[1080px] overflow-hidden bg-[#17191a] font-['Lato','Noto_Sans_CJK_SC',sans-serif] proportional-nums">
      <StatusBar />
      <Header />
      <Quote />
      <Stats />
      <NewsTicker />
      <Tabs />
      <PriceChart />
      <VolumeChart />
      <IndicatorChips />
      <InvestNews />
      <StockMoves />
      <SectorRow />
      <TradeBar />
    </div>
  );
}
